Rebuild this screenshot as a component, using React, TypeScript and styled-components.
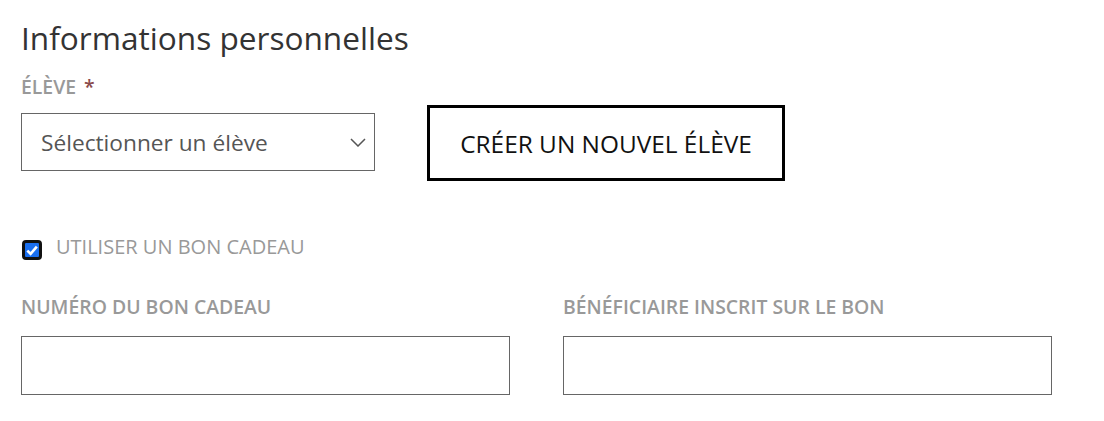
import React from 'react';
import styled, { createGlobalStyle } from 'styled-components';

const GlobalStyle = createGlobalStyle`
  body {
    margin: 0;
    background: #fff;
    font-family: "Open Sans", "Liberation Sans", sans-serif;
  }
`;

const Page = styled.div`
  padding: 16px 0 0 21px;
  width: 1031px;
`;

const Title = styled.h2`
  margin: 0 0 15px;
  font-size: 31.6px;
  font-weight: 400;
  line-height: 44px;
  color: #333;
`;

const Label = styled.label`
  display: block;
  font-size: 19.4px;
  font-weight: 600;
  color: #999;
  text-transform: uppercase;
  line-height: 24px;
`;

const Star = styled.span`
  color: #8a4a4a;
  margin-left: 8px;
`;

const SelectRow = styled.div`
  display: flex;
  align-items: center;
  gap: 52px;
  margin-top: 6px;
`;

const SelectBox = styled.div`
  width: 354px;
  height: 58px;
  box-sizing: border-box;
  border: 1px solid #666;
  display: flex;
  align-items: center;
  padding: 0 19px;
  font-size: 22.7px;
  color: #555;
  margin-top: -2px;
`;

const Chevron = styled.svg`
  margin-left: auto;
  margin-right: -11px;
`;

const OutlineButton = styled.button`
  width: 358px;
  height: 76px;
  box-sizing: border-box;
  border: 3px solid #000;
  background: #fff;
  font-family: inherit;
  font-size: 24.4px;
  color: #111;
  text-transform: uppercase;
  padding: 0;
  cursor: pointer;
`;

const CheckRow = styled.div`
  display: flex;
  align-items: flex-start;
  gap: 14px;
  margin-top: 53px;
  padding-left: 1px;
`;

const Box = styled.span`
  width: 20px;
  height: 20px;
  box-sizing: border-box;
  border: 3px solid #111;
  border-radius: 4px;
  background: #1a6ff0;
  display: flex;
  align-items: center;
  justify-content: center;
  margin-top: 6px;
`;

const CheckText = styled.span`
  font-size: 20px;
  color: #999;
  line-height: 26px;
`;

const Grid = styled.div`
  display: grid;
  grid-template-columns: 489px 489px;
  column-gap: 53px;
  margin-top: 35px;
`;

const Field = styled.div`
  display: flex;
  flex-direction: column;
  gap: 17px;
`;

const TextInput = styled.input`
  width: 489px;
  height: 59px;
  box-sizing: border-box;
  border: 1px solid #666;
  outline: none;
  font-family: inherit;
  font-size: 20px;
  padding: 0 16px;
`;

export default function App() {
  return (
    <>
      <GlobalStyle />
      <Page>
        <Title>Informations personnelles</Title>
        <Label>
          Élève<Star>*</Star>
        </Label>
        <SelectRow>
          <SelectBox>
            Sélectionner un élève
            <Chevron width="16" height="9" viewBox="0 0 16 9">
              <path d="M1 1 L8 8 L15 1" fill="none" stroke="#555" strokeWidth="1.5" />
            </Chevron>
          </SelectBox>
          <OutlineButton>Créer un nouvel élève</OutlineButton>
        </SelectRow>
        <CheckRow>
          <Box>
            <svg width="12" height="11" viewBox="0 0 12 11">
              <path d="M1.3 5.6 L4.6 8.8 L10.8 1.6" fill="none" stroke="#fff" strokeWidth="2.6" />
            </svg>
          </Box>
          <CheckText>UTILISER UN BON CADEAU</CheckText>
        </CheckRow>
        <Grid>
          <Field>
            <Label>Numéro du bon cadeau</Label>
            <TextInput />
          </Field>
          <Field>
            <Label>Bénéficiaire inscrit sur le bon</Label>
            <TextInput />
          </Field>
        </Grid>
      </Page>
    </>
  );
}
